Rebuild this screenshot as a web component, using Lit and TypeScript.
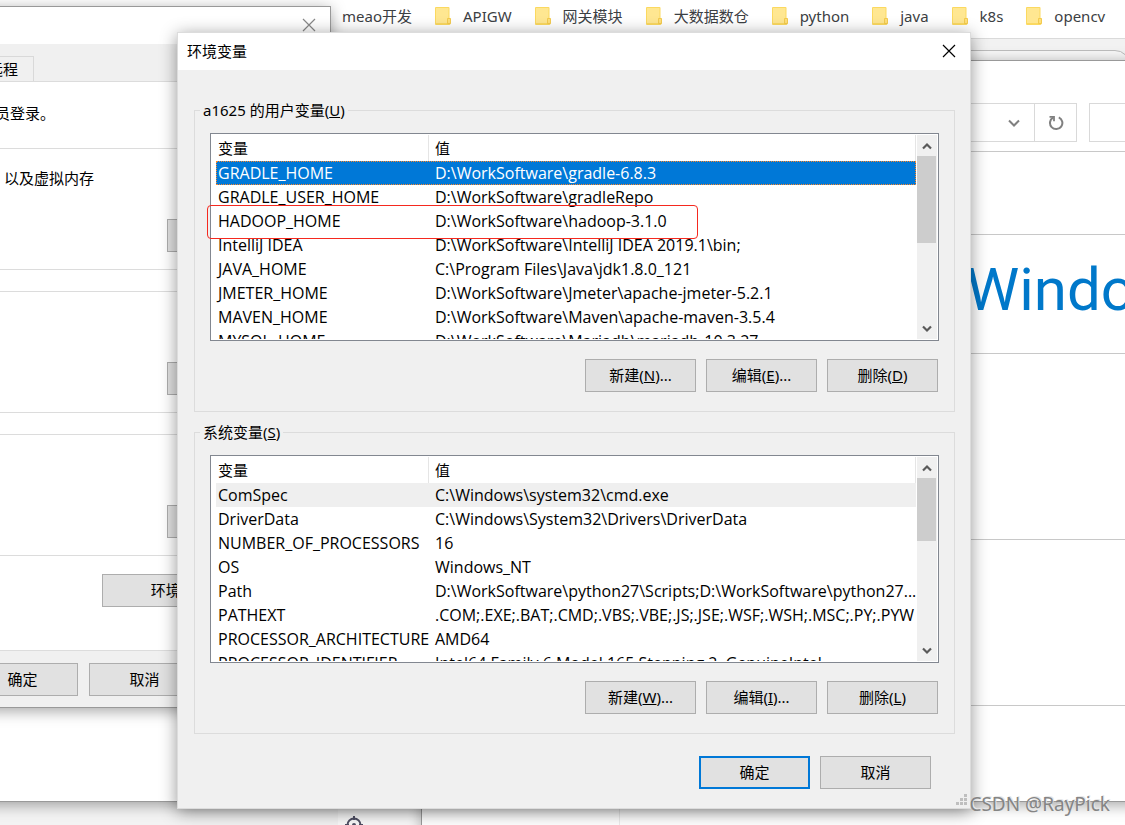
import { LitElement, html, css, svg, nothing } from "lit";
import { customElement, property, state } from "lit/decorators.js";
import { classMap } from "lit/directives/class-map.js";

type Variable = [name: string, value: string];
type Action = { text: string; key: string; more: boolean };

const userVariables: Variable[] = [
  ["GRADLE_HOME", "D:\\WorkSoftware\\gradle-6.8.3"],
  ["GRADLE_USER_HOME", "D:\\WorkSoftware\\gradleRepo"],
  ["HADOOP_HOME", "D:\\WorkSoftware\\hadoop-3.1.0"],
  ["IntelliJ IDEA", "D:\\WorkSoftware\\IntelliJ IDEA 2019.1\\bin;"],
  ["JAVA_HOME", "C:\\Program Files\\Java\\jdk1.8.0_121"],
  ["JMETER_HOME", "D:\\WorkSoftware\\Jmeter\\apache-jmeter-5.2.1"],
  ["MAVEN_HOME", "D:\\WorkSoftware\\Maven\\apache-maven-3.5.4"],
  ["MYSQL_HOME", "D:\\WorkSoftware\\Mariadb\\mariadb-10.3.27"],
];

const systemVariables: Variable[] = [
  ["ComSpec", "C:\\Windows\\system32\\cmd.exe"],
  ["DriverData", "C:\\Windows\\System32\\Drivers\\DriverData"],
  ["NUMBER_OF_PROCESSORS", "16"],
  ["OS", "Windows_NT"],
  ["Path", "D:\\WorkSoftware\\python27\\Scripts;D:\\WorkSoftware\\python27..."],
  ["PATHEXT", ".COM;.EXE;.BAT;.CMD;.VBS;.VBE;.JS;.JSE;.WSF;.WSH;.MSC;.PY;.PYW"],
  ["PROCESSOR_ARCHITECTURE", "AMD64"],
  ["PROCESSOR_IDENTIFIER", "Intel64 Family 6 Model 165 Stepping 2, GenuineIntel"],
];

const bookmarks = ["meao开发", "APIGW", "网关模块", "大数据数仓", "python", "java", "k8s", "opencv"];

const controls = css`
  * {
    box-sizing: border-box;
  }
  button {
    font: inherit;
    color: inherit;
    margin: 0;
    padding: 0;
  }
  .push {
    width: 111px;
    height: 33px;
    flex: none;
    padding-bottom: 2px;
    background: #e1e1e1;
    border: 1px solid #adadad;
    white-space: nowrap;
  }
  .push.default {
    border: 2px solid #0078d7;
  }
  svg {
    display: block;
  }
`;

const closeIcon = html`<svg width="14" height="14" viewBox="0 0 14 14" aria-hidden="true">
  <path d="M1 1L13 13M13 1L1 13" fill="none" stroke="currentColor" stroke-width="1.2" />
</svg>`;

const arrow = (d: string) => html`<svg width="10" height="8" viewBox="0 0 10 8" aria-hidden="true">
  <path d=${d} fill="none" stroke="#5a5a5a" stroke-width="2.2" />
</svg>`;

@customElement("variable-group")
class VariableGroup extends LitElement {
  @property() heading = "";
  @property() key = "";
  @property({ attribute: false }) rows: Variable[] = [];
  @property({ attribute: false }) actions: Action[] = [];
  @property({ type: Number }) thumb = 87;
  @property({ type: Boolean }) marked = false;
  @property({ type: Boolean }) active = false;
  @state() private selected = 0;

  static styles = [
    controls,
    css`
      :host {
        display: block;
      }
      .group {
        margin: 0;
        min-width: 0;
        padding: 0 15px 19px;
        border: 1px solid #dcdcdc;
      }
      .heading {
        margin-left: -10px;
        padding: 0 3px;
        height: 20px;
        line-height: 20px;
      }
      .area {
        position: relative;
        margin-top: 13px;
      }
      .list {
        display: flex;
        gap: 1px;
        height: 208px;
        padding: 1px 1px 1px 5px;
        background: #fff;
        border: 1px solid #828790;
      }
      .view {
        flex: 1;
        min-width: 0;
        overflow: hidden;
      }
      table {
        width: 100%;
        table-layout: fixed;
        border-collapse: separate;
        border-spacing: 0;
      }
      th,
      td {
        padding: 0 0 0 6px;
        text-align: left;
        font-weight: normal;
        white-space: nowrap;
      }
      td {
        height: 24px;
        font-family: "Open Sans", "Noto Sans", "Noto Sans CJK SC", sans-serif;
        font-size: 16px;
        line-height: 24px;
      }
      th {
        height: 26px;
        line-height: 26px;
        border-right: 1px solid #e5e5e5;
      }
      th:first-child,
      td:first-child {
        width: 213px;
        padding-left: 2px;
      }
      .row.current {
        background: #efefef;
      }
      .row.focused {
        color: #fff;
        background: #0078d7;
        outline: 1px dotted #ff8728;
        outline-offset: -1px;
      }
      .scroll {
        display: flex;
        flex-direction: column;
        width: 20px;
        padding-right: 1px;
        background: #f0f0f0;
      }
      .step {
        display: grid;
        place-items: center;
        height: 21px;
        background: none;
        border: 0;
      }
      .track {
        flex: 1;
      }
      .thumb {
        background: #cdcdcd;
      }
      .mark {
        position: absolute;
        left: -3px;
        top: 72px;
        width: 491px;
        height: 34px;
        border: 1px solid #f5291f;
        border-radius: 4px;
        pointer-events: none;
      }
      .actions {
        display: flex;
        justify-content: flex-end;
        gap: 10px;
        margin: 18px 1px 0 0;
      }
    `,
  ];

  render() {
    return html`<fieldset class="group">
      <legend class="heading">${this.heading}(<u>${this.key}</u>)</legend>
      <div class="area">
        <div class="list">
          <div class="view">
            <table>
              <thead>
                <tr><th>变量</th><th>值</th></tr>
              </thead>
              <tbody>
                ${this.rows.map(
                  ([name, value], i) => html`<tr
                    class=${classMap({
                      row: true,
                      current: i === this.selected && !this.active,
                      focused: i === this.selected && this.active,
                    })}
                    @click=${() => (this.selected = i)}
                  ><td>${name}</td><td>${value}</td></tr>`
                )}
              </tbody>
            </table>
          </div>
          <div class="scroll">
            <button class="step" aria-label="向上">${arrow("M1 6.5L5 2.5L9 6.5")}</button>
            <div class="track"><div class="thumb" style="height:${this.thumb}px"></div></div>
            <button class="step" aria-label="向下">${arrow("M1 1.5L5 5.5L9 1.5")}</button>
          </div>
        </div>
        ${this.marked ? html`<div class="mark"></div>` : nothing}
      </div>
      <div class="actions">
        ${this.actions.map(
          (a) => html`<button class="push">${a.text}(<u>${a.key}</u>)${a.more ? "..." : ""}</button>`
        )}
      </div>
    </fieldset>`;
  }
}

@customElement("app-root")
class AppRoot extends LitElement {
  static styles = [
    controls,
    css`
      :host {
        display: block;
        position: relative;
        height: 100vh;
        overflow: hidden;
        background: #fff;
        color: #000;
        font: 15px/20px "Noto Sans", "Noto Sans CJK SC", sans-serif;
      }

      /* browser behind everything */
      .browser {
        display: flex;
        flex-direction: column;
        height: 100%;
      }
      .bookmarks {
        display: flex;
        align-items: center;
        gap: 23px;
        flex: none;
        height: 39px;
        padding: 0 0 6px 342px;
        border-bottom: 1px solid #dadada;
        white-space: nowrap;
      }
      .bookmark {
        display: flex;
        align-items: center;
        gap: 12px;
        color: #3c4043;
        text-decoration: none;
      }
      .tabs {
        flex: none;
        height: 30px;
        padding: 11px 0 0;
        background: #f2f2f2;
        overflow: hidden;
      }
      .pill {
        height: 30px;
        margin-right: -5px;
        border: 1px solid #bdbdbd;
        border-radius: 16px;
        background: #f7f7f7;
      }
      .page {
        flex: 1;
        display: grid;
        grid-template-columns: 338px 84px 198px 1fr;
      }
      .pane {
        display: flex;
        align-items: flex-end;
        border-right: 1px solid #ececec;
      }
      .pane.outer {
        background: #f3f3f3;
        border: 0;
      }
      .pane.rail {
        padding-left: 7px;
        background: #fafafa;
        border-color: #9a9a9a;
        box-shadow: inset -12px 0 12px -10px rgba(0, 0, 0, 0.2);
      }
      .target {
        margin-bottom: -9px;
      }

      /* desktop windows */
      .window {
        position: absolute;
        border: 1px solid #999;
        box-shadow: 0 3px 14px rgba(0, 0, 0, 0.36);
      }
      .explorer {
        top: 60px;
        bottom: 23px;
        left: -20px;
        right: -20px;
        padding-top: 42px;
        background: #fff;
        overflow: hidden;
      }
      .address {
        display: flex;
        justify-content: flex-end;
        height: 39px;
      }
      .path {
        display: flex;
        flex: 1;
        justify-content: flex-end;
        align-items: center;
        border: 1px solid #d9d9d9;
        padding-right: 14px;
      }
      .refresh {
        display: grid;
        place-items: center;
        width: 42px;
        background: none;
        border: 1px solid #d9d9d9;
        border-left: 0;
      }
      .search {
        width: 55px;
        margin-left: 12px;
        border: 1px solid #d9d9d9;
        border-radius: 0;
        font: inherit;
      }
      .rule {
        border-top: 1px solid #c8c8c8;
        margin-left: 20px;
      }
      .rule.first {
        height: 83px;
        margin-top: 9px;
      }
      .rule.brand {
        height: 119px;
        padding: 13px 0 0 965px;
        color: #0078ca;
        font: 400 60px/84px Roboto, "Open Sans", sans-serif;
        white-space: nowrap;
      }
      .rule.details {
        height: 186px;
      }
      .rule.activation {
        height: 166px;
      }

      .properties {
        top: 6px;
        left: -140px;
        width: 471px;
        background: #f0f0f0;
      }
      .caption {
        display: flex;
        align-items: center;
        justify-content: flex-end;
        height: 37px;
        padding: 0 14px 2px;
        background: #fff;
        color: #888;
      }
      .close {
        display: grid;
        place-items: center;
        background: none;
        border: 0;
      }
      .tab {
        width: 74px;
        height: 25px;
        margin: 12px 0 0 99px;
        padding: 2px 15px 0 0;
        border: 1px solid #d9d9d9;
        border-bottom: 0;
        text-align: right;
      }
      .sheet {
        background: #fff;
        border: solid #dcdcdc;
        border-width: 1px 0;
        height: 570px;
      }
      .section {
        display: flex;
        flex-direction: column;
        align-items: flex-end;
        justify-content: flex-end;
        padding: 0 38px 17px 0;
        border-bottom: 1px solid #dcdcdc;
      }
      .section.notice {
        display: block;
        height: 67px;
        padding: 21px 0 0 134px;
      }
      .section.perf {
        height: 121px;
        justify-content: space-between;
        padding-top: 19px;
      }
      .summary {
        align-self: flex-start;
        padding-left: 143px;
      }
      .section.boxed {
        height: 122px;
        margin-top: 21px;
        border-top: 1px solid #dcdcdc;
      }
      .section.last {
        border-bottom: 0;
        padding: 18px 38px 0 0;
      }
      .push.medium {
        width: 125px;
      }
      .push.wide {
        width: 190px;
      }
      .commands {
        display: flex;
        gap: 11px;
        padding: 12px 0 11px 106px;
      }

      .dialog {
        top: 32px;
        left: 177px;
        right: 154px;
        background: #f0f0f0;
        border-color: #dcdcdc;
        box-shadow: 0 3px 16px rgba(0, 0, 0, 0.42);
      }
      .title {
        display: flex;
        align-items: center;
        justify-content: space-between;
        height: 37px;
        padding: 0 14px 2px 9px;
        background: #fff;
      }
      .title h1 {
        margin: 0;
        font: inherit;
      }
      .body {
        display: flex;
        flex-direction: column;
        gap: 10px;
        padding: 30px 15px 19px 16px;
      }
      .footer {
        display: flex;
        justify-content: flex-end;
        gap: 10px;
        padding: 12px 24px 0 0;
      }
      .grip {
        position: absolute;
        right: 2px;
        bottom: 2px;
      }
      .watermark {
        position: absolute;
        right: 15px;
        bottom: 8px;
        font-size: 19px;
        line-height: 26px;
        color: #858585;
        text-shadow: 1px -1px 0 #e8e8e8;
      }
    `,
  ];

  private folder = html`<svg width="16" height="18" viewBox="0 0 16 18" aria-hidden="true">
    <path d="M1 0h12.5a1 1 0 0 1 1 1v10.5h1v5a1.5 1.5 0 0 1-1.5 1.5H1a1 1 0 0 1-1-1V1a1 1 0 0 1 1-1z" fill="#fbd960" />
    <path d="M1 1h12.5v15H1z" fill="#ffe791" />
    <path d="M12.5 11.5h3v5h-3z" fill="#ffe07a" stroke="#f0c440" stroke-width=".8" />
  </svg>`;

  private grip = html`<svg class="grip" width="12" height="12" viewBox="0 0 12 12" aria-hidden="true">
    ${[[8, 0], [4, 4], [8, 4], [0, 8], [4, 8], [8, 8]].map(
      ([x, y]) => svg`<rect x=${x} y=${y} width="3" height="3" fill="#bfbfbf" />`
    )}
  </svg>`;

  private renderBrowser() {
    return html`<div class="browser">
      <nav class="bookmarks">
        ${bookmarks.map((b, i) => html`<a class="bookmark" href="#">${i ? this.folder : nothing}<span>${b}</span></a>`)}
      </nav>
      <div class="tabs"><div class="pill"></div></div>
      <div class="page">
        <div class="pane outer"></div>
        <div class="pane rail">
          <svg class="target" width="18" height="18" viewBox="0 0 18 18" aria-hidden="true">
            <circle cx="9" cy="9" r="6.5" fill="none" stroke="#505064" stroke-width="2" />
            <circle cx="9" cy="9" r="2" fill="#505064" />
            <path d="M9 0v4M9 14v4M0 9h4M14 9h4" stroke="#505064" stroke-width="2" />
          </svg>
        </div>
        <div class="pane"></div>
        <div></div>
      </div>
    </div>`;
  }

  private renderExplorer() {
    return html`<section class="window explorer">
      <div class="address">
        <div class="path">
          <svg width="12" height="8" viewBox="0 0 12 8" aria-hidden="true">
            <path d="M1 1.5L6 6.5L11 1.5" fill="none" stroke="#808080" stroke-width="2" />
          </svg>
        </div>
        <button class="refresh" aria-label="刷新">
          <svg width="16" height="16" viewBox="0 0 16 16" aria-hidden="true">
            <path d="M10.8 2.3A6.2 6.2 0 1 1 5 2.6" fill="none" stroke="#808080" stroke-width="2" />
            <path d="M1.5 1.8H6V6.3" fill="none" stroke="#808080" stroke-width="1.8" />
          </svg>
        </button>
        <input class="search" aria-label="搜索" />
      </div>
      <div class="rule first"></div>
      <div class="rule brand">Windows 10</div>
      <div class="rule details"></div>
      <div class="rule activation"></div>
      <div class="rule"></div>
    </section>`;
  }

  private renderProperties() {
    return html`<section class="window properties">
      <div class="caption"><button class="close" aria-label="关闭">${closeIcon}</button></div>
      <div class="tab">远程</div>
      <div class="sheet">
        <div class="section notice">员登录。</div>
        <div class="section perf">
          <span class="summary">以及虚拟内存</span>
          <button class="push medium">设置(<u>S</u>)...</button>
        </div>
        <div class="section boxed"><button class="push medium">设置(<u>E</u>)...</button></div>
        <div class="section boxed"><button class="push medium">设置(<u>T</u>)...</button></div>
        <div class="section last"><button class="push wide">环境变量(<u>N</u>)...</button></div>
      </div>
      <div class="commands">
        <button class="push">确定</button>
        <button class="push">取消</button>
        <button class="push">应用(<u>A</u>)</button>
      </div>
    </section>`;
  }

  private actions(a: string, b: string, c: string): Action[] {
    return [
      { text: "新建", key: a, more: true },
      { text: "编辑", key: b, more: true },
      { text: "删除", key: c, more: false },
    ];
  }

  render() {
    return html`
      ${this.renderBrowser()} ${this.renderExplorer()} ${this.renderProperties()}
      <section class="window dialog" role="dialog" aria-labelledby="title">
        <header class="title">
          <h1 id="title">环境变量</h1>
          <button class="close" aria-label="关闭">${closeIcon}</button>
        </header>
        <div class="body">
          <variable-group
            heading="a1625 的用户变量"
            key="U"
            .rows=${userVariables}
            .actions=${this.actions("N", "E", "D")}
            .thumb=${87}
            active
            marked
          ></variable-group>
          <variable-group
            heading="系统变量"
            key="S"
            .rows=${systemVariables}
            .actions=${this.actions("W", "I", "L")}
            .thumb=${63}
          ></variable-group>
          <div class="footer">
            <button class="push default">确定</button>
            <button class="push">取消</button>
          </div>
        </div>
        ${this.grip}
      </section>
      <div class="watermark">CSDN @RayPick</div>
    `;
  }
}
